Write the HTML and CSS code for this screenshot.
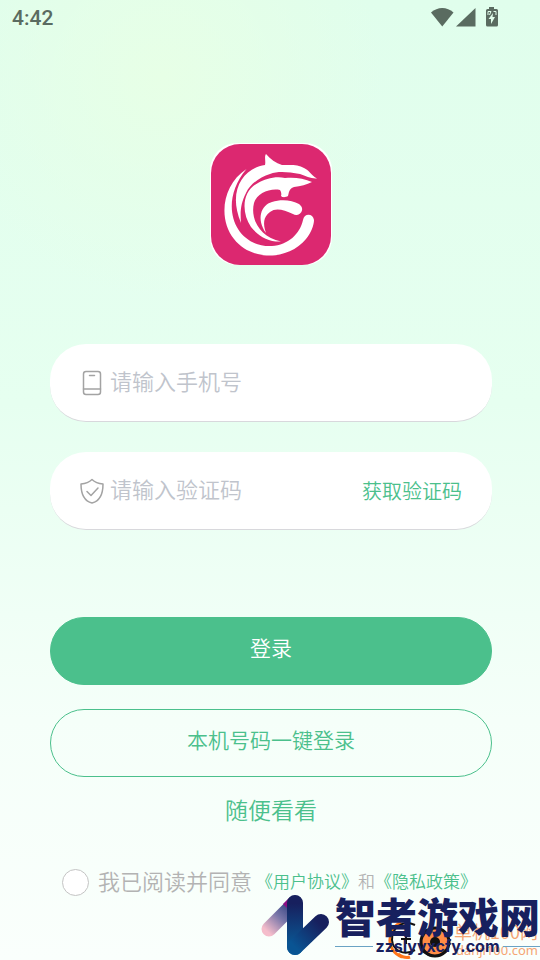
FILE: index.html
```html
<!DOCTYPE html>
<html lang="zh-CN">
<head>
    <meta charset="UTF-8">
    <meta name="viewport" content="width=device-width, initial-scale=1.0">
    <title>登录</title>
    <link rel="stylesheet" href="styles.css">
</head>
<body>
    <header class="status-bar">
        <span class="clock">4:42</span>
        <svg class="status-icons" width="68" height="22" viewBox="0 0 68 22" fill="#5a6b60">
            <path d="M0 5.5C6.500 -.5 16 -.5 22.500 5.500L11.250 19.500Z"/>
            <path d="M44.500 1V19.500H25Z"/>
            <path d="M58 0h5v2h2.500q1.500 0 1.500 1.500v14.500q0 1.500-1.500 1.500h-9q-1.500 0-1.500-1.500v-14.500q0-1.500 1.500-1.500h1.500z"/>
            <path d="M62 6l-4.500 6h2.500v5l4-7h-2.500z" fill="#e0feeb"/>
            <path d="M57 8V4.500h3L58.500 8M62.500 4.500h2.500V8" fill="none" stroke="#e0feeb"/>
        </svg>
    </header>

    <main class="login">
        <svg class="logo" viewBox="0 0 122 122" role="img" aria-label="logo">
            <rect width="122" height="122" rx="27" fill="#fff"/>
            <rect x="1" y="1" width="120" height="121" rx="29" fill="#dc2870"/>
            <g fill="#fff">
                <path d="M36.500 26C12 42 8 76 24 96C42 119 79 117 96 96C101 90 104 82 104 77C103 70 94 70 93 77C90 91 78 102 62 103C25 105 7 61 36.500 26Z"/>
                <path d="M31 80C17 47 34 25 55 22C56 18 54 14 56 11C60 16 66 20 72 22C79 22 88 21 94 25C99 27 101 32 107 35.500C101 36 96 33 90 31C78 29 68 28 60 31C50 34 40 41 36 50C31 60 30 67 31 80Z"/>
                <path d="M102 39C94 35 83 34 75 35C65 33 55 36 48 40C32 48 31 69 41 84C49 94 59 99 71 98.500C50 94 40 76 44 60C47 50 60 45 70 47Q72 50 71 53C73 55 76 54 78 53Q79 45 84 44Q94 43 102 39Z"/>
                <path d="M56 90C46 76 51 62 62 59C71 56 82 57 89 61C97 67 88 75 83 71C74 67 66 64 60 69C53 74 53 81 56 90Z"/>
            </g>
        </svg>

        <form class="login-form">
            <div class="field">
                <svg class="field-icon" width="26" height="26" viewBox="0 0 26 26" fill="none" stroke="#a3a3a3" stroke-width="1.500" stroke-linecap="round" aria-hidden="true">
                    <rect x="4.500" y="1.500" width="17" height="23" rx="2.500"/>
                    <path d="M10.500 5.500h5M4.500 19h17"/>
                </svg>
                <input type="tel" id="phone" placeholder="请输入手机号" aria-label="手机号">
            </div>
            <div class="field">
                <svg class="field-icon" width="26" height="26" viewBox="0 0 26 26" fill="none" stroke="#a3a3a3" stroke-width="1.500" stroke-linecap="round" stroke-linejoin="round" aria-hidden="true">
                    <path d="M13 1.500Q9 5.500 2 6C2 15 5 23 13 25C21 23 24 15 24 6Q17 5.500 13 1.500Z"/>
                    <path d="M8 13.500l4 4 7-7.500"/>
                </svg>
                <input type="text" id="code" placeholder="请输入验证码" aria-label="验证码">
                <button type="button" class="code-btn">获取验证码</button>
            </div>

            <button type="submit" class="btn btn-primary">登录</button>
            <button type="button" class="btn btn-outline">本机号码一键登录</button>
            <a href="#" class="guest-link">随便看看</a>

            <div class="agreement">
                <input type="checkbox" id="agree">
                <label for="agree">我已阅读并同意</label>
                <span class="terms"><a href="#">《用户协议》</a>和<a href="#">《隐私政策》</a></span>
            </div>
        </form>
    </main>

    <!-- Site marks over the bottom right corner -->
    <div class="danji-mark">
        <svg width="64" height="40" viewBox="0 0 64 40" fill="none" aria-hidden="true">
            <path d="M13 2C-2 10-2 31 14 37M10 34q7 5 12 3" stroke="#ff761a" stroke-width="3"/>
            <path d="M27 5C14-1 4 8 4 20C5 31 16 36 27 30" stroke="#111" stroke-width="2"/>
            <path d="M18 14v10M13 19h10" stroke="#111" stroke-width="2"/>
            <circle cx="47" cy="22" r="14" fill="#ff8c45" stroke="#111" stroke-width="3"/>
            <circle cx="47" cy="22" r="5" fill="#111"/>
            <path d="M33 30q14 12 27 0" stroke="#111" stroke-width="2"/>
        </svg>
        <div class="danji-text">
            <span class="danji-name">单机100网</span>
            <span class="danji-url">danji100.com</span>
        </div>
    </div>
    <div class="site-mark">
        <svg width="70" height="64" viewBox="0 0 70 64" fill="none" stroke-linecap="round" aria-hidden="true">
            <defs>
                <linearGradient id="fade" gradientUnits="userSpaceOnUse" x1="8" y1="40" x2="34" y2="12">
                    <stop offset="0" stop-color="#f5bdcb"/>
                    <stop offset=".5" stop-color="#7775a8"/>
                    <stop offset="1" stop-color="#253879"/>
                </linearGradient>
                <linearGradient id="stem" gradientUnits="userSpaceOnUse" x1="0" y1="5" x2="0" y2="60">
                    <stop offset=".1" stop-color="#17205e"/>
                    <stop offset="1" stop-color="#07619d"/>
                </linearGradient>
                <linearGradient id="arm" gradientUnits="userSpaceOnUse" x1="34" y1="54" x2="58" y2="30">
                    <stop offset="0" stop-color="#095493"/>
                    <stop offset="1" stop-color="#17205e"/>
                </linearGradient>
            </defs>
            <path d="M8 36L34 10" stroke="url(#fade)" stroke-width="15"/>
            <path d="M28 5L22 11L28 17Z" fill="#8d0e83"/>
            <path d="M34 10L34.010 54" stroke="url(#stem)" stroke-width="16"/>
            <path d="M34 54L60 29" stroke="url(#arm)" stroke-width="16"/>
        </svg>
        <div class="site-text">
            <span class="site-name">智者游戏网</span>
            <span class="site-url">zzslyyxcfy.com</span>
        </div>
    </div>
</body>
</html>
```

FILE: styles.css
```css
* {
    box-sizing: border-box;
}

body {
    margin: 0;
    min-height: 100vh;
    position: relative;
    overflow-x: hidden;
    font-family: "Noto Sans CJK SC", sans-serif;
    font-weight: 350;
    background: radial-gradient(circle at 30% 8%, #e7ffe6 0, rgba(231, 255, 230, 0) 220px),
        linear-gradient(#e0feec 0%, #e6fff0 42%, #f5fff9 75%, #fafffc 100%);
}

button, input {
    font-family: inherit;
    font-weight: inherit;
}

button {
    cursor: pointer;
}

a {
    color: #4bc08c;
    text-decoration: none;
}

.status-bar {
    display: flex;
    justify-content: space-between;
    align-items: center;
    height: 36px;
    padding: 0 41px 0 12px;
}

.clock {
    font-family: Roboto, sans-serif;
    font-size: 21px;
    font-weight: 500;
    color: #5a6b60;
}

.login {
    display: flex;
    flex-direction: column;
    align-items: center;
    padding: 107px 48px 0 50px;
}

.logo {
    width: 122px;
    height: 122px;
}

.login-form {
    display: flex;
    flex-direction: column;
    width: 100%;
    margin-top: 79px;
}

.field {
    display: flex;
    align-items: center;
    height: 78px;
    margin-bottom: 30px;
    padding: 0 30px 0 29px;
    background: #fff;
    border-bottom: 1px solid #d8d8dc;
    border-radius: 36px;
}

.field-icon {
    flex: none;
    margin-right: 5px;
}

.field input {
    flex: 1;
    min-width: 0;
    height: 60px;
    padding: 0 0 6px;
    border: none;
    outline: none;
    background: transparent;
    font-size: 22px;
    color: #333;
}

.field input::placeholder {
    color: #c0c4cc;
}

.code-btn {
    padding: 0;
    border: none;
    background: none;
    font-size: 20px;
    color: #4bc08c;
}

.btn {
    height: 68px;
    padding: 0 0 8px;
    border: 1px solid #4bc08c;
    border-radius: 34px;
    font-size: 21px;
}

.btn-primary {
    margin-top: 57px;
    background: #4bc08c;
    color: #fff;
}

.btn-outline {
    margin-top: 24px;
    background: transparent;
    color: #4bc08c;
}

.guest-link {
    margin: 15px auto 0;
    font-size: 23px;
    line-height: 34px;
}

.agreement {
    display: flex;
    align-items: center;
    margin-top: 40px;
    padding-left: 12px;
    color: #b3b3b3;
    white-space: nowrap;
}

.agreement input {
    flex: none;
    appearance: none;
    width: 27px;
    height: 27px;
    margin: 0 9px 0 0;
    border: 1px solid #c4c4c4;
    border-radius: 50%;
    background: #fff;
}

.agreement input:checked {
    background: #4bc08c;
}

.agreement label {
    padding-bottom: 4px;
    font-size: 22px;
    line-height: 28px;
}

.terms {
    margin-left: 4px;
    padding-bottom: 4px;
    font-size: 17px;
}

.danji-mark {
    position: absolute;
    right: 2px;
    bottom: 0;
    display: flex;
    align-items: center;
    gap: 2px;
    font-weight: 400;
    color: #f5a574;
}

.danji-text {
    display: flex;
    flex-direction: column;
    align-items: flex-end;
}

.danji-name {
    font-size: 18px;
    line-height: 20px;
}

.danji-url {
    font-family: "Noto Sans", sans-serif;
    font-size: 13px;
    line-height: 18px;
}

.site-mark {
    position: absolute;
    right: 0;
    bottom: 3px;
    display: flex;
    align-items: center;
    gap: 4px;
    color: #17205e;
}

.site-text {
    display: flex;
    flex-direction: column;
}

.site-name {
    font-size: 41px;
    font-weight: 900;
    line-height: 42px;
}

.site-url {
    display: flex;
    align-items: center;
    gap: 3px;
    font-family: Inter, sans-serif;
    font-size: 16px;
    font-weight: bold;
    line-height: 20px;
}

.site-url::before,
.site-url::after {
    content: "";
    flex: 1;
    height: 1px;
    background: #6aa3c4;
}
```
